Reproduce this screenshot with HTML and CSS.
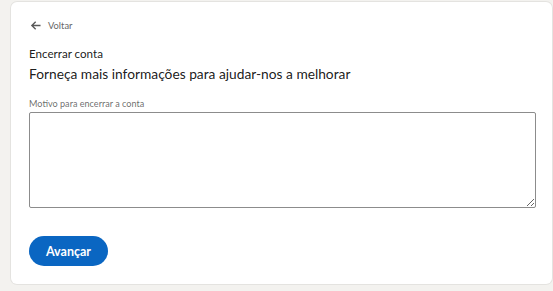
FILE: index.html
```html
<!DOCTYPE html>
<html lang="pt">
<head>
<meta charset="utf-8">
<link rel="stylesheet" href="styles.css">
</head>
<body>
<main class="card">
  <a class="back" href="#">
    <svg class="back-icon" width="11" height="11" viewBox="0 0 12 12" aria-hidden="true"><path d="M11.5 6H2M6.2 1.8L2 6l4.2 4.2" fill="none" stroke="currentColor" stroke-width="1.5"/></svg>
    <span>Voltar</span>
  </a>
  <h1 class="title">Encerrar conta</h1>
  <h2 class="subtitle">Forneça mais informações para ajudar-nos a melhorar</h2>
  <label class="label" for="reason">Motivo para encerrar a conta</label>
  <textarea id="reason" class="field"></textarea>
  <div class="actions">
    <button class="btn" type="button">Avançar</button>
  </div>
</main>
</body>
</html>
```
FILE: styles.css
```css
html, body {
  margin: 0;
  padding: 0;
  background: #f3f2ef;
  font-family: "Lato", "Noto Sans", sans-serif;
}
body {
  padding: 2px 1px 7px 11px;
}
.card {
  background: #fff;
  border-radius: 6px;
  box-shadow: 0 0 0 1px rgba(0,0,0,0.06);
  padding: 16px 16px 18px 18px;
  height: 282px;
  box-sizing: border-box;
  display: flex;
  flex-direction: column;
}
.back {
  display: flex;
  align-items: center;
  gap: 7px;
  color: #666666;
  text-decoration: none;
  font-size: 9.3px;
  height: 14px;
  margin-left: 1px;
}
.back-icon { color: #595959; }
.title {
  margin: 14px 0 0;
  font-size: 11.6px;
  font-weight: 400;
  color: rgba(0,0,0,0.9);
  line-height: 16px;
}
.subtitle {
  margin: 2px 0 0;
  font-size: 13.75px;
  font-weight: 400;
  color: rgba(0,0,0,0.9);
  line-height: 20px;
}
.label {
  margin-top: 14px;
  font-size: 9.1px;
  color: rgba(0,0,0,0.6);
  line-height: 12px;
}
.field {
  margin-top: 2px;
  height: 96px;
  box-sizing: border-box;
  border: 1px solid #8c8c8c;
  border-radius: 2px;
  width: 507px;
  resize: vertical;
  font: inherit;
}
.actions {
  margin-top: 28px;
  display: flex;
}
.btn {
  background: #0a66c2;
  color: #fff;
  border: 0;
  border-radius: 16px;
  height: 30px;
  width: 79px;
  font-family: inherit;
  font-weight: 700;
  font-size: 12.5px;
  padding: 0;
}
```
